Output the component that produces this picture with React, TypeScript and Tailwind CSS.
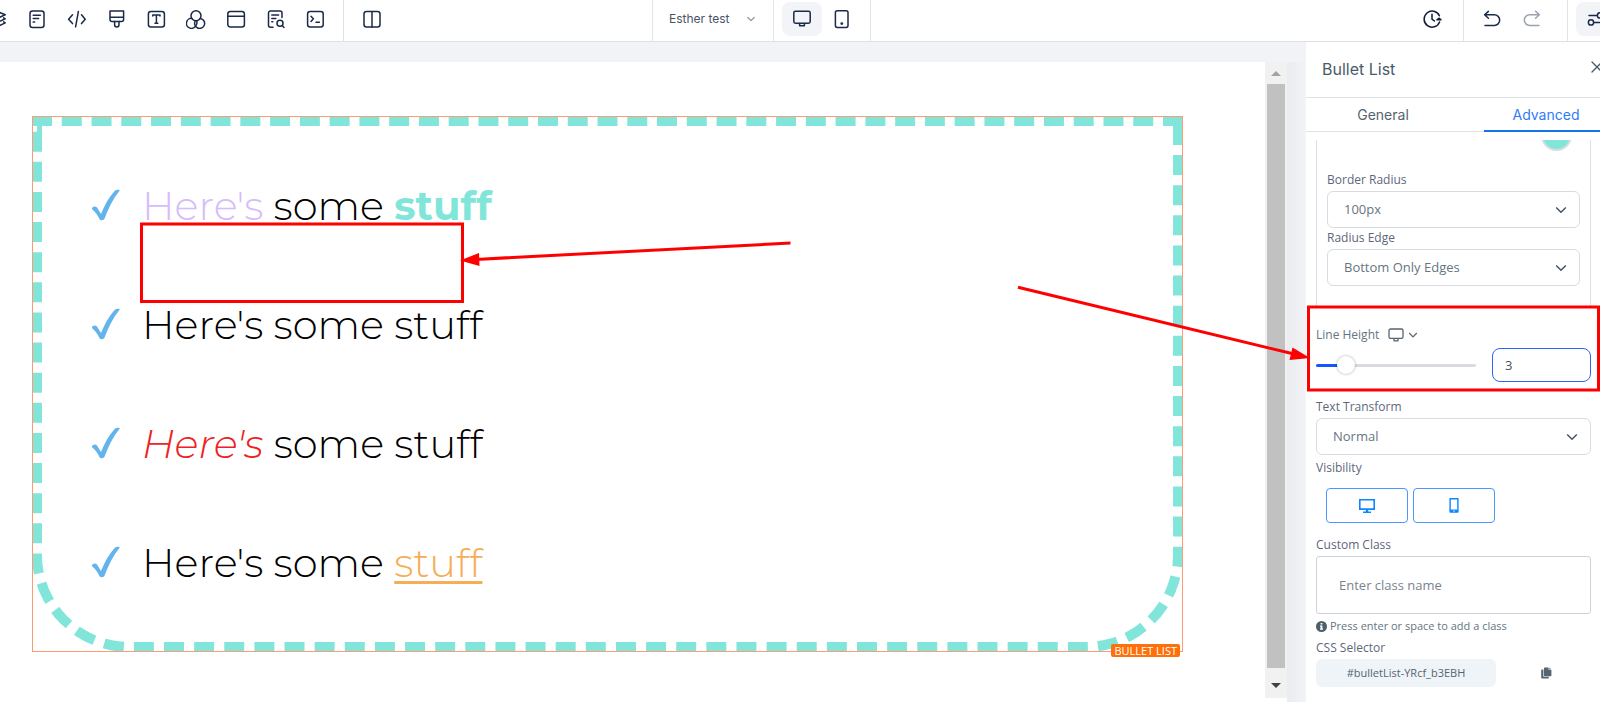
import type { ReactNode } from "react";

function Icon({ children, size = 20, box = 20, className = "" }: { children: ReactNode; size?: number; box?: number; className?: string }) {
  return (
    <svg
      width={size}
      height={size}
      viewBox={`0 0 ${box} ${box}`}
      fill="none"
      stroke="currentColor"
      strokeWidth="1.5"
      strokeLinecap="round"
      strokeLinejoin="round"
      aria-hidden="true"
      className={`shrink-0 ${className}`}
    >
      {children}
    </svg>
  );
}

const tools: { name: string; art: ReactNode }[] = [
  {
    name: "Layers",
    art: (
      <>
        <path d="M11 2.4 L19.2 5.8 L11 9.4 L2.8 5.8 Z" />
        <path d="M17.6 8.8 L19.2 9.8 L11 13.6 L2.8 9.8 L4.4 8.8" />
        <path d="M17.6 12.8 L19.2 13.8 L11 17.8 L2.8 13.8 L4.4 12.8" />
      </>
    ),
  },
  {
    name: "Pages",
    art: (
      <>
        <rect x="4" y="2" width="14" height="16.5" rx="2.5" />
        <path d="M7.2 6.2 H14.4 M7.2 9.6 H12.6 M7.2 13 H8.6" />
      </>
    ),
  },
  { name: "Code", art: <path d="M6.5 5.8 L2.6 10.2 L6.5 14.6 M15.5 5.8 L19.2 10.2 L15.5 14.6 M12.4 2.4 L9.6 17.8" /> },
  {
    name: "Styles",
    art: (
      <>
        <path d="M4 2 H17.6 V10.4 A2 2 0 0 1 15.6 12.4 H6 A2 2 0 0 1 4 10.4 Z M4 8.2 H17.6" />
        <path d="M8.6 12.6 V15.8 A2.2 2.2 0 0 0 13 15.8 V12.6" />
      </>
    ),
  },
  {
    name: "Typography",
    art: (
      <>
        <rect x="2.4" y="2.5" width="16" height="15.5" rx="2.5" />
        <path d="M6.8 7 V6 H14 V7 M10.4 6 V14.2 M9 14.2 H11.8" />
      </>
    ),
  },
  {
    name: "Colors",
    art: (
      <>
        <circle cx="10" cy="6.7" r="5" />
        <path d="M6 9.4 A5 5 0 1 0 10 16.4 A5 5 0 0 0 10.6 11.7" />
        <path d="M14 9.4 A5 5 0 1 1 9.4 11.7" />
      </>
    ),
  },
  {
    name: "Header",
    art: (
      <>
        <rect x="1.8" y="2.5" width="16.6" height="15.5" rx="2.5" />
        <path d="M2 7.2 H18" />
      </>
    ),
  },
  {
    name: "Search page",
    art: (
      <>
        <path d="M7 18.3 H4.5 A2 2 0 0 1 2.5 16.3 V4 A2 2 0 0 1 4.5 2 H14 A2 2 0 0 1 16 4 V8.5" />
        <path d="M5.8 6 H12.6 M5.8 9.4 H9.8 M5.8 12.8 H6.8" />
        <circle cx="14" cy="14.2" r="3" />
        <path d="M16.2 16.5 L18 18.4" />
      </>
    ),
  },
  {
    name: "Console",
    art: (
      <>
        <rect x="1.6" y="2.5" width="15.6" height="15.5" rx="2.5" />
        <path d="M5 7.2 L7.4 9.8 L5 12.4 M10 13.2 H13.4" />
      </>
    ),
  },
];

function TopBar() {
  return (
    <header className="flex h-[42px] shrink-0 overflow-hidden border-b border-[#dfe1e4] bg-white text-[#1b2a49] shadow-[0_1px_1px_rgba(0,0,0,0.06)]">
      <div className="flex w-[344px] shrink-0 items-start justify-end border-r border-[#dfe1e4] pr-[7px]">
        {tools.map((t) => (
          <button key={t.name} type="button" aria-label={t.name} className="flex h-[37px] w-[40px] shrink-0 items-center justify-center">
            <Icon>{t.art}</Icon>
          </button>
        ))}
      </div>
      <button type="button" aria-label="Layout" className="ml-2 flex h-[37px] w-10 items-center justify-center">
        <Icon>
          <rect x="2" y="2.5" width="16" height="15.5" rx="2.5" />
          <path d="M10 2.5 V18" />
        </Icon>
      </button>
      <div className="ml-[260px] flex border-x border-[#e2e4e8]">
        <button type="button" className="flex h-[37px] w-[120px] items-center justify-between pr-4 pl-4 font-[Inter,sans-serif] text-[12px] text-[#475467]">
          Esther test
          <Icon size={12} box={12} className="text-[#8a94a3]">
            <path strokeWidth="1.2" d="M2.8 4.5 L6 7.7 L9.2 4.5" />
          </Icon>
        </button>
      </div>
      <div className="flex border-r border-[#e2e4e8] px-2 pt-[2px]">
        <button type="button" aria-label="Desktop" className="flex h-[34px] w-10 items-center justify-center rounded-lg bg-[#f2f4f8]">
          <Icon>
            <rect x="1.8" y="2.2" width="16.4" height="12" rx="1.6" />
            <path d="M7.6 14.4 V16.8 H12.4 V14.4" />
          </Icon>
        </button>
        <button type="button" aria-label="Tablet" className="flex h-[34px] w-10 items-center justify-center">
          <Icon>
            <rect x="3.4" y="1.8" width="12.6" height="16.6" rx="1.8" />
            <circle cx="9.8" cy="14.6" r="0.7" fill="currentColor" />
          </Icon>
        </button>
      </div>
      <div className="min-w-0 flex-1" />
      <button type="button" aria-label="History" className="mr-[11px] flex h-[37px] w-10 items-center justify-center text-[#111d35]">
        <Icon>
          <path d="M17.4 6.8 A8 8 0 1 0 17.6 13" />
          <path d="M10 5.2 V10.2 L12.4 12" />
          <path d="M15 10.8 H19 L17.2 9.2 Z" fill="currentColor" />
        </Icon>
      </button>
      <div className="flex w-[105px] border-x border-[#e2e4e8] pl-2">
        <button type="button" aria-label="Undo" className="flex h-[37px] w-10 items-center justify-center">
          <Icon>
            <path d="M6.4 2.4 L2.6 5.8 L6.4 9.2 M2.8 5.8 H12.4 A5 5 0 0 1 12.4 16.4 H3" />
          </Icon>
        </button>
        <button type="button" aria-label="Redo" className="flex h-[37px] w-10 items-center justify-center text-[#9aa3b2]">
          <Icon>
            <path d="M13.6 2.4 L17.4 5.8 L13.6 9.2 M17.2 5.8 H7.6 A5 5 0 0 0 7.6 16.4 H17" />
          </Icon>
        </button>
      </div>
      <div className="w-8 shrink-0 overflow-hidden pt-[2px] pl-2">
        <button type="button" aria-label="Settings" className="flex h-[34px] w-10 items-center justify-center rounded-lg bg-[#f2f4f8]">
          <Icon>
            <path d="M3 6.4 H11 M7.6 13.4 H18" />
            <circle cx="14" cy="6.4" r="2.6" />
            <circle cx="5" cy="13.4" r="2.6" />
          </Icon>
        </button>
      </div>
    </header>
  );
}

const items: ReactNode[] = [
  <>
    <span className="text-[#d6bcfa]">Here's</span> some <strong className="font-bold text-[#81e6d9]">stuff</strong>
  </>,
  <>Here's some stuff</>,
  <>
    <em className="text-[#ee2222]">Here's</em> some stuff
  </>,
  <>
    Here's some <span className="text-[#f6ad55] underline decoration-[3px] underline-offset-4">stuff</span>
  </>,
];

function Canvas() {
  return (
    <main className="flex min-w-0 flex-1 bg-[#f2f3f6] pt-5">
      <div className="min-w-0 flex-1 bg-white pt-[54px] pr-[82px] pl-8">
        <div className="relative">
          <ul className="rounded-b-[97px] border-[10px] border-dashed border-[#81e6d9] py-5 pl-[49px] font-[Montserrat,Inter,sans-serif] text-[40px] leading-[119px] font-light text-black">
            {items.map((item, i) => (
              <li key={i} className="flex items-center whitespace-nowrap">
                <svg width="30" height="34" viewBox="0 0 30 34" aria-hidden="true" className="mr-[21px] shrink-0">
                  <path
                    d="M1.6 18.2 C3 17 5 17.2 6 18.6 L10 25 C13.4 16.4 18 8.2 23.6 2 C24.8 0.9 27 0.6 28.4 0.9 C29 1.1 28.8 1.6 28.4 2.1 C22.2 9.8 17.4 19.4 13.6 29.6 C12.8 31.6 9.4 31.8 8.4 30 C6.6 26.4 4.8 23.4 1.6 20.8 C0.8 20 0.8 19 1.6 18.2 Z"
                    fill="#63b3ed"
                  />
                </svg>
                <span>{item}</span>
              </li>
            ))}
          </ul>
          <div className="pointer-events-none absolute inset-0 border border-[#ff9b73]" />
          <span className="absolute right-[3px] -bottom-[5px] rounded-[2px] bg-[#ff700a] px-[3px] font-['Open_Sans',sans-serif] text-[11px] leading-[13px] text-white">
            BULLET LIST
          </span>
        </div>
      </div>
      <div className="flex w-[22px] shrink-0 flex-col bg-white">
        <div className="mb-1 flex flex-1 flex-col items-center bg-[#f1f1f1]">
          <svg width="10" height="22" viewBox="0 0 10 22" aria-hidden="true">
            <path d="M0 14 L5 9 L10 14 Z" fill="#a3a3a3" />
          </svg>
          <div className="w-[18px] flex-1 bg-[#c1c1c1]" />
          <svg width="10" height="30" viewBox="0 0 10 30" aria-hidden="true">
            <path d="M0 15 L5 20 L10 15 Z" fill="#404040" />
          </svg>
        </div>
      </div>
      <div className="w-[19px] shrink-0 bg-linear-to-r from-[#ebecef] to-[#f2f3f6]" />
    </main>
  );
}

function Label({ htmlFor, children }: { htmlFor?: string; children: ReactNode }) {
  return (
    <label htmlFor={htmlFor} className="block pb-[2px] text-[12px] leading-[18px] font-medium text-[#5d677c]">
      {children}
    </label>
  );
}

function Select({ id, value }: { id: string; value: string }) {
  return (
    <div className="relative">
      <select id={id} defaultValue={value} className="block h-[37px] w-full appearance-none rounded-md border border-[#d8dbe2] bg-white pr-8 pl-4 text-[13px] text-[#66757f]">
        <option>{value}</option>
      </select>
      <svg width="12" height="12" viewBox="0 0 12 12" fill="none" stroke="#475467" strokeWidth="1.5" aria-hidden="true" className="pointer-events-none absolute top-[13px] right-[13px]">
        <path d="M1.2 3.5 L6 8.3 L10.8 3.5" />
      </svg>
    </div>
  );
}

function Panel() {
  return (
    <aside className="w-[294px] shrink-0 overflow-hidden bg-white font-['Open_Sans',sans-serif]">
      <div className="flex h-[56px] justify-between overflow-hidden border-b border-[#dfe3e6] pl-4 font-[Inter,sans-serif]">
        <h2 className="text-[16px] leading-[54px] text-[#4a5a68]">Bullet List</h2>
        <button type="button" aria-label="Close" className="-mr-[3px] h-[50px]">
          <Icon size={12} box={12} className="text-[#4a5a68]">
            <path strokeWidth="1.3" d="M1 1 L11 11 M11 1 L1 11" />
          </Icon>
        </button>
      </div>
      <div className="flex h-[34px] font-[Inter,sans-serif] text-[14px]">
        <button type="button" className="w-[178px] border-b border-[#dfe3e6] pr-6 text-[#56646f]">
          General
        </button>
        <button type="button" className="flex-1 border-b-2 border-[#1273eb] pl-2 text-[#2f7df6]">
          Advanced
        </button>
      </div>

      <div className="pt-2 pr-[9px] pl-[10px]">
        <div className="overflow-hidden border-x border-[#dcdfe6] px-[10px] pb-5">
          <div className="flex h-[31px] justify-end pr-2">
            <button type="button" aria-label="Border Color" className="-mt-5 size-[31px] rounded-full border-2 border-[#d9dde1] bg-[#81e6d9]" />
          </div>
          <Label htmlFor="radius">Border Radius</Label>
          <Select id="radius" value="100px" />
          <div className="pt-px">
            <Label htmlFor="edge">Radius Edge</Label>
          </div>
          <Select id="edge" value="Bottom Only Edges" />
        </div>

        <div className="flex items-center pt-5">
          <label htmlFor="line-height" className="text-[12px] leading-[18px] text-[#66757f]">
            Line Height
          </label>
          <svg width="16" height="14" viewBox="0 0 16 14" fill="none" stroke="#56646f" strokeWidth="1.3" strokeLinejoin="round" aria-hidden="true" className="ml-[9px]">
            <rect x="1" y="1" width="14" height="9.4" rx="1.6" />
            <path d="M6 10.6 V12.8 H10 V10.6" />
          </svg>
          <svg width="10" height="10" viewBox="0 0 10 10" fill="none" stroke="#56646f" strokeWidth="1.2" aria-hidden="true" className="ml-1">
            <path d="M1.2 3 L5 6.8 L8.8 3" />
          </svg>
        </div>
        <div className="flex items-center gap-4 pt-1">
          <input
            type="range"
            aria-label="Line Height slider"
            min={0}
            max={20}
            defaultValue={3}
            className="h-[3px] min-w-0 flex-1 appearance-none rounded-full bg-[linear-gradient(to_right,#1557ff_16%,#dadbe0_16%)] [&::-webkit-slider-thumb]:size-[18px] [&::-webkit-slider-thumb]:appearance-none [&::-webkit-slider-thumb]:rounded-full [&::-webkit-slider-thumb]:bg-white [&::-webkit-slider-thumb]:shadow-[0_0_3px_rgba(0,0,0,0.35)]"
          />
          <input id="line-height" type="text" defaultValue="3" className="h-[34px] w-[99px] rounded-lg border border-[#2f66f0] px-3 text-[13px] text-[#4b4f56]" />
        </div>

        <div className="pt-4">
          <Label htmlFor="transform">Text Transform</Label>
          <Select id="transform" value="Normal" />
        </div>
        <div className="pt-1">
          <Label>Visibility</Label>
          <div className="flex gap-[5px] pt-[9px] pl-[10px] text-[#0d86ff]">
            <button type="button" aria-label="Show on desktop" className="flex h-[35px] w-[82px] items-center justify-center rounded border border-[#4a97ff]">
              <svg width="16" height="14" viewBox="0 0 16 14" aria-hidden="true" fill="currentColor">
                <path fillRule="evenodd" d="M0 0 H16 V11 H9.2 V12.4 H12 V14 H4 V12.4 H6.8 V11 H0 Z M1.6 1.6 V9.2 H14.4 V1.6 Z" />
              </svg>
            </button>
            <button type="button" aria-label="Show on mobile" className="flex h-[35px] w-[82px] items-center justify-center rounded border border-[#4a97ff]">
              <svg width="10" height="15" viewBox="0 0 10 15" aria-hidden="true" fill="currentColor">
                <path fillRule="evenodd" d="M1.2 0 H8.8 Q9.6 0 9.6 0.8 V14 Q9.6 14.8 8.8 14.8 H1.2 Q0.4 14.8 0.4 14 V0.8 Q0.4 0 1.2 0 Z M1.8 1.6 V11.4 H8.2 V1.6 Z M4.2 12.4 V13.6 H5.8 V12.4 Z" />
              </svg>
            </button>
          </div>
        </div>
        <div className="pt-[13px]">
          <Label htmlFor="custom">Custom Class</Label>
          <input
            id="custom"
            type="text"
            placeholder="Enter class name"
            className="block h-[58px] w-full rounded-[3px] border border-[#ccd3dd] px-[22px] text-[13px] placeholder:text-[#7a8290]"
          />
        </div>
        <p className="flex items-center gap-[3px] pt-[3px] text-[11px] leading-[18px] text-[#66757f]">
          <svg width="11" height="11" viewBox="0 0 11 11" aria-hidden="true">
            <circle cx="5.5" cy="5.5" r="5.5" fill="#4f5f69" />
            <path d="M4.6 2 H6.4 V3.6 H4.6 Z M4 4.6 H6.4 V7.6 H7 V8.8 H4 V7.6 H4.6 V5.8 H4 Z" fill="#fff" />
          </svg>
          Press enter or space to add a class
        </p>
        <div className="pt-1">
          <Label>CSS Selector</Label>
        </div>
        <div className="flex items-center">
          <code className="flex h-7 w-[180px] items-center justify-center rounded-md bg-[#eff4f8] font-['Open_Sans',sans-serif] text-[11px] font-medium text-[#56646f]">
            #bulletList-YRcf_b3EBH
          </code>
          <button type="button" aria-label="Copy selector" className="ml-[45px]">
            <svg width="11" height="12" viewBox="0 0 11 12" fill="#56646f" aria-hidden="true">
              <path d="M3.6 0.6 H7.6 V3 H10.4 V8.6 Q10.4 9.2 9.8 9.2 H3.6 Q3 9.2 3 8.6 V1.2 Q3 0.6 3.6 0.6 Z M8.2 0.6 L10.4 2.5 H8.2 Z" />
              <path d="M0.8 2.4 H2.4 V9.8 H7.8 V10.8 Q7.8 11.4 7.2 11.4 H0.8 Q0.2 11.4 0.2 10.8 V3 Q0.2 2.4 0.8 2.4 Z" />
            </svg>
          </button>
        </div>
      </div>
    </aside>
  );
}

function Annotations() {
  return (
    <svg width="1600" height="702" viewBox="0 0 1600 702" fill="none" stroke="#ff0000" strokeWidth="3" aria-hidden="true" className="pointer-events-none absolute top-0 left-0">
      <rect x="141.5" y="224" width="321" height="77.5" />
      <rect x="1308.5" y="307" width="290" height="83" />
      <path d="M790.5 243 L476 259.4 M1018 287.2 L1294 354" />
      <path d="M460 260.5 L479 253 L479.5 266 Z M1310 358 L1292.5 347.5 L1289.5 360 Z" fill="#ff0000" stroke="none" />
    </svg>
  );
}

export default function App() {
  return (
    <div className="relative flex min-h-screen flex-col overflow-hidden bg-white">
      <TopBar />
      <div className="flex flex-1">
        <Canvas />
        <Panel />
      </div>
      <Annotations />
    </div>
  );
}
